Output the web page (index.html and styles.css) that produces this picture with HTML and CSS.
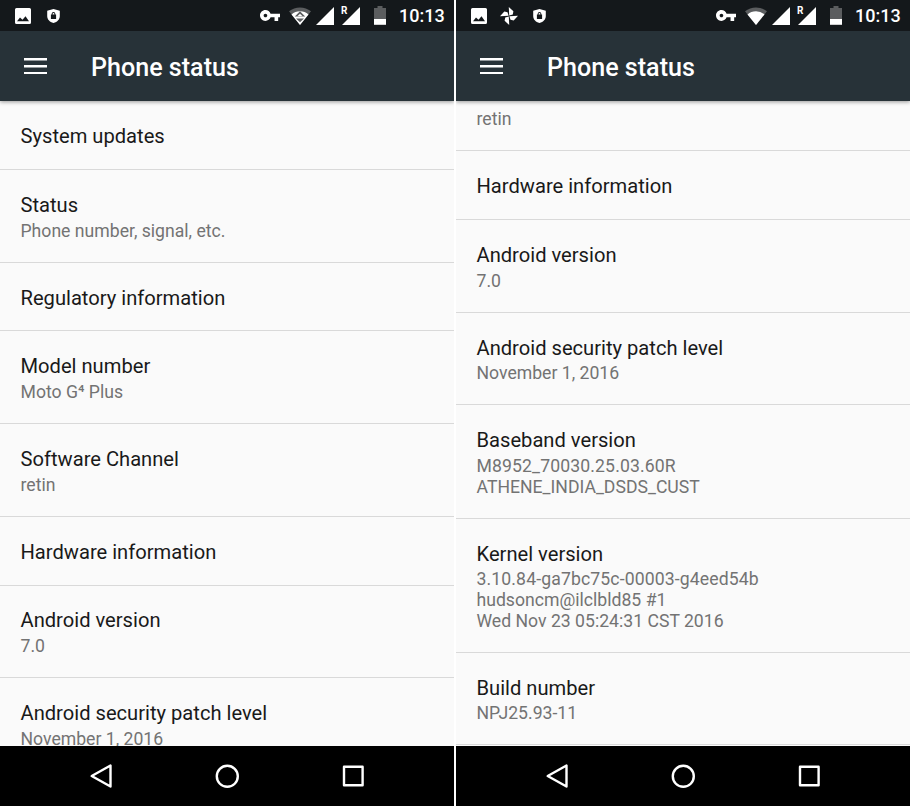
FILE: index.html
```html
<!DOCTYPE html>
<html lang="en">
<head>
<meta charset="utf-8">
<title>Phone status</title>
<link rel="stylesheet" href="styles.css">
</head>
<body>
<svg width="0" height="0" class="defs" aria-hidden="true">
  <symbol id="image" viewBox="0 0 16 16"><path fill-rule="evenodd" d="M1.500 0h13A1.500 1.500 0 0 1 16 1.500v13a1.500 1.500 0 0 1-1.500 1.500h-13A1.500 1.500 0 0 1 0 14.500v-13A1.500 1.500 0 0 1 1.500 0zM2 13.200h12L10.500 8.300l-3 3.500L5 9.500z"/></symbol>
  <symbol id="shield" viewBox="0 0 13 14"><path fill-rule="evenodd" d="M6.500 0L12.800 1.800v5.200c0 3.300-2.300 6-6.300 7-4-1-6.300-3.700-6.300-7V1.800zM4.700 5.600H3.900v4.300h5.200V5.600h-.8V4.800a1.800 1.800 0 0 0-3.600 0zm.9 0v-.8a.9.900 0 0 1 1.800 0v.8z"/></symbol>
  <symbol id="pinwheel" viewBox="0 0 18 18">
    <path id="blade" d="M9.200 8.600L8.800 0l4.600 4.300-.6 3.200z"/>
    <use href="#blade" transform="rotate(90 9 9)"/>
    <use href="#blade" transform="rotate(180 9 9)"/>
    <use href="#blade" transform="rotate(270 9 9)"/>
  </symbol>
  <symbol id="key" viewBox="1 6 22 12"><path d="M12.650 10C11.830 7.670 9.610 6 7 6c-3.310 0-6 2.690-6 6s2.690 6 6 6c2.610 0 4.830-1.670 5.650-4H17v4h4v-4h2v-4H12.650zM7 14c-1.100 0-2-.9-2-2s.9-2 2-2 2 .9 2 2-.9 2-2 2z"/></symbol>
  <symbol id="wifi" viewBox="0 0 22 18"><path fill="#5b5d5f" d="M0 4.300a17.500 17.500 0 0 1 22 0L11 18z"/><path d="M2.500 7.400a13 13 0 0 1 17 0L11 18z"/></symbol>
  <symbol id="wifi-activity" viewBox="0 0 22 18"><path fill="#5b5d5f" d="M0 4.300a17.500 17.500 0 0 1 22 0L11 18z"/><path d="M2.500 7.400a13 13 0 0 1 17 0L11 18z"/><path fill="#5b5d5f" d="M5.800 9.400L11 4.200l5.200 5.200zM7 11.500h8L11 15.300z"/><path d="M8.400 9.200L11 6.800l2.600 2.400z"/></symbol>
  <symbol id="signal" viewBox="0 0 18 18"><path d="M18 0v18H0z"/></symbol>
  <symbol id="battery" viewBox="0 0 12 19"><path fill="#5b5d5f" d="M3.500 0h5v2H12v11H0V2h3.500z"/><path d="M0 13h12v5.800H0z"/></symbol>
  <symbol id="back" viewBox="0 0 24 26"><path class="stroke" d="M20.500 2.500v21L1.700 13z"/></symbol>
  <symbol id="home" viewBox="0 0 24 24"><circle class="stroke" cx="12.300" cy="12.300" r="10.500"/></symbol>
  <symbol id="recent" viewBox="0 0 22 22"><rect class="stroke" x="2" y="1.700" width="18.600" height="18.600"/></symbol>
</svg>
<main class="screens">
  <section class="phone">
    <div class="status-bar">
      <svg class="i-image"><use href="#image"/></svg>
      <svg class="i-shield"><use href="#shield"/></svg>
      <div class="tray">
        <svg class="i-key"><use href="#key"/></svg>
        <svg class="i-wifi"><use href="#wifi-activity"/></svg>
        <svg class="i-signal"><use href="#signal"/></svg>
        <span class="roaming"><span class="r">R</span><svg class="i-signal"><use href="#signal"/></svg></span>
        <svg class="i-battery"><use href="#battery"/></svg>
        <span class="clock">10:13</span>
      </div>
    </div>
    <header class="app-bar"><span class="menu"></span><h1>Phone status</h1></header>
    <div class="content">
      <ul class="list">
        <li><h2>System updates</h2></li>
        <li><h2>Status</h2><p>Phone number, signal, etc.</p></li>
        <li><h2>Regulatory information</h2></li>
        <li><h2>Model number</h2><p>Moto G⁴ Plus</p></li>
        <li><h2>Software Channel</h2><p>retin</p></li>
        <li><h2>Hardware information</h2></li>
        <li><h2>Android version</h2><p>7.0</p></li>
        <li><h2>Android security patch level</h2><p>November 1, 2016</p></li>
      </ul>
    </div>
    <nav class="nav-bar">
      <svg class="i-back"><use href="#back"/></svg>
      <svg class="i-home"><use href="#home"/></svg>
      <svg class="i-recent"><use href="#recent"/></svg>
    </nav>
  </section>
  <section class="phone">
    <div class="status-bar">
      <svg class="i-image"><use href="#image"/></svg>
      <svg class="i-pinwheel"><use href="#pinwheel"/></svg>
      <svg class="i-shield"><use href="#shield"/></svg>
      <div class="tray">
        <svg class="i-key"><use href="#key"/></svg>
        <svg class="i-wifi"><use href="#wifi"/></svg>
        <svg class="i-signal"><use href="#signal"/></svg>
        <span class="roaming"><span class="r">R</span><svg class="i-signal"><use href="#signal"/></svg></span>
        <svg class="i-battery"><use href="#battery"/></svg>
        <span class="clock">10:13</span>
      </div>
    </div>
    <header class="app-bar"><span class="menu"></span><h1>Phone status</h1></header>
    <div class="content">
      <ul class="list">
        <li class="cut"><p>retin</p></li>
        <li><h2>Hardware information</h2></li>
        <li><h2>Android version</h2><p>7.0</p></li>
        <li><h2>Android security patch level</h2><p>November 1, 2016</p></li>
        <li><h2>Baseband version</h2><p><span class="build-id">M8952_70030.25.03.60R</span><br>ATHENE_INDIA_DSDS_CUST</p></li>
        <li><h2>Kernel version</h2><p><span class="build-id">3.10.84-ga7bc75c-00003-g4eed54b</span><br>hudsoncm@ilclbld85 #1<br>Wed Nov 23 05:24:31 CST 2016</p></li>
        <li><h2>Build number</h2><p>NPJ25.93-11</p></li>
      </ul>
    </div>
    <nav class="nav-bar">
      <svg class="i-back"><use href="#back"/></svg>
      <svg class="i-home"><use href="#home"/></svg>
      <svg class="i-recent"><use href="#recent"/></svg>
    </nav>
  </section>
</main>
</body>
</html>
```
FILE: styles.css
```css
* { box-sizing: border-box; margin: 0; padding: 0; }
body { font-family: Roboto, sans-serif; background: #fff; overflow: hidden; }
svg { display: block; flex: none; fill: #fff; }
.defs { position: absolute; }
.stroke { fill: none; stroke: #fff; stroke-width: 2.4; stroke-linejoin: round; }

.screens { display: grid; grid-template-columns: 454px 454px; gap: 2px; height: 806px; }
.phone { display: grid; grid-template-rows: 31px 70px 645px 60px; min-width: 0; }

.status-bar { display: flex; align-items: center; background: #14181b; padding: 0 10px 0 15px; }
.i-image { width: 16px; height: 16px; margin-right: 16px; }
.i-shield { width: 13px; height: 14px; }
.i-pinwheel { width: 18px; height: 18px; margin: 0 15px 0 -3px; }
.tray { display: flex; align-items: center; margin-left: auto; }
.i-key { width: 20px; height: 11px; margin-right: 9px; }
.i-wifi { width: 22px; height: 18px; margin-right: 5px; }
.i-signal { width: 18px; height: 18px; }
.roaming { position: relative; margin-left: 8px; }
.r { position: absolute; left: -1px; top: -1px; color: #fff; font-size: 10px; line-height: 10px; font-weight: 700; }
.i-battery { width: 12px; height: 19px; margin: 0 13px 0 14px; }
.clock { color: #fff; font-size: 18px; line-height: 31px; font-weight: 500; width: 45px; white-space: nowrap; }

.app-bar { position: relative; z-index: 1; display: flex; align-items: center; background: #273238; box-shadow: 0 1px 4px rgba(0, 0, 0, .4); padding-left: 24px; clip-path: inset(0 0 -8px 0); }
.menu { width: 23px; height: 16px; background: linear-gradient(#fff 0 0) 0 0 / 100% 2.500px no-repeat, linear-gradient(#fff 0 0) 0 50% / 100% 2.500px no-repeat, linear-gradient(#fff 0 0) 0 100% / 100% 2.500px no-repeat; }
h1 { margin-left: 44px; color: #fff; font-size: 25.100px; line-height: 30px; font-weight: 500; padding-top: 3px; }

.content { overflow: hidden; background: #fafafa; }
.list { list-style: none; padding-top: .2px; }
li { padding: 22.900px 20.500px 20.900px; border-bottom: 1px solid #d9d9d9; }
li.cut { padding-top: 4.400px; }
h2 { color: #191919; font-size: 20.150px; line-height: 24px; font-weight: 400; }
p { position: relative; top: .4px; margin-top: 3.300px; color: #737373; font-size: 17.640px; line-height: 20.600px; }
.build-id { letter-spacing: .12px; }

.nav-bar { background: #000; display: flex; align-items: center; padding-left: 90px; }
.i-back { width: 24px; height: 26px; }
.i-home { width: 24px; height: 24px; margin-left: 101px; overflow: visible; }
.i-recent { width: 22px; height: 22px; margin-left: 103px; }
```
